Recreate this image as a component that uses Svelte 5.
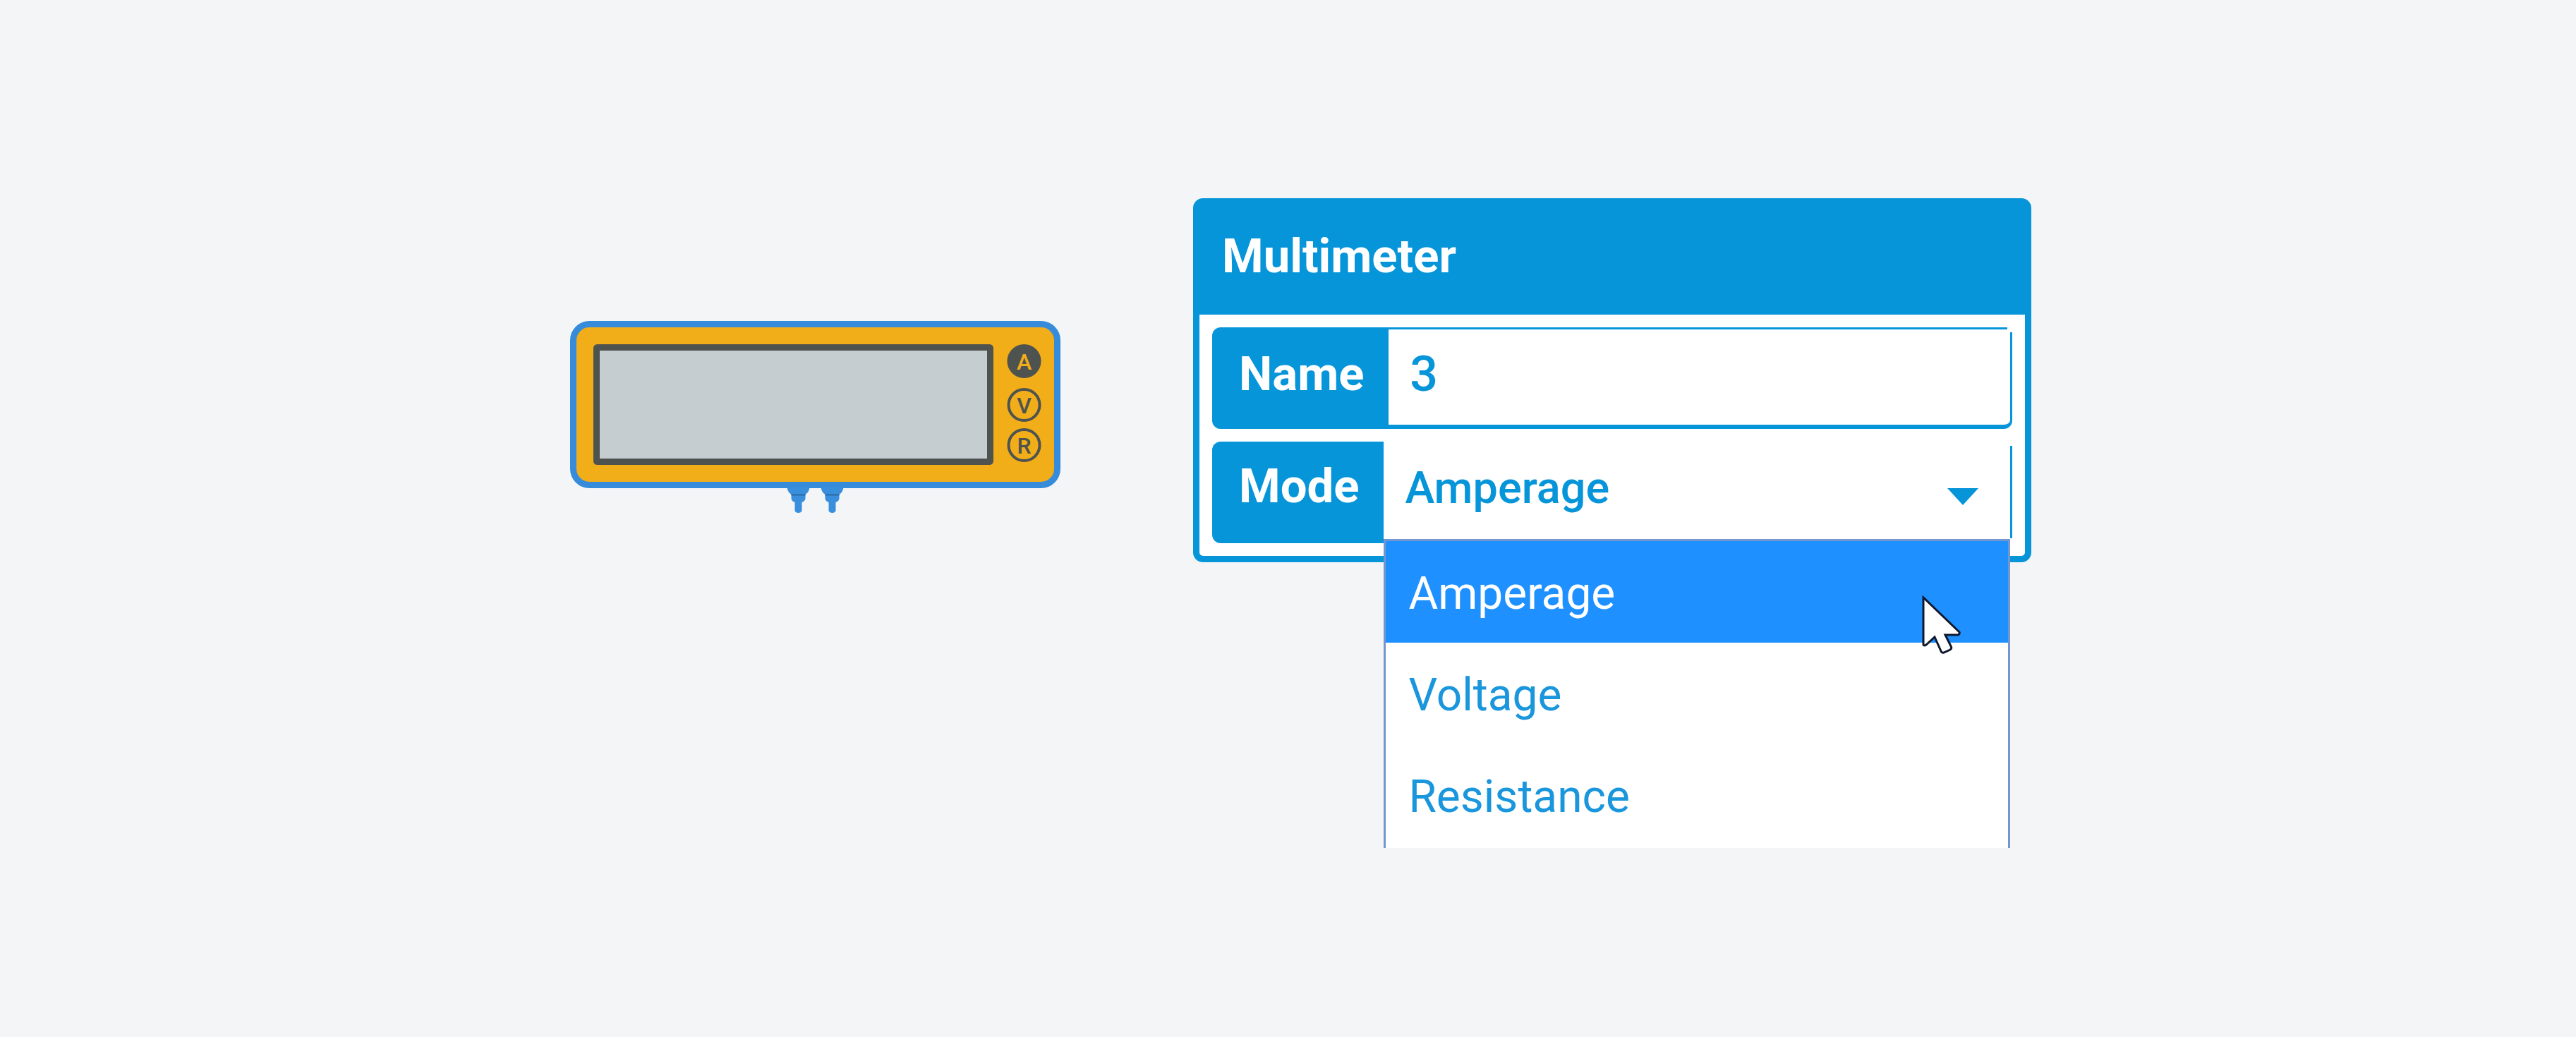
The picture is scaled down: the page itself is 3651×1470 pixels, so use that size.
<script>
  const modes = ['Amperage', 'Voltage', 'Resistance'];
  const indicators = [
    { letter: 'A', y: 57 },
    { letter: 'V', y: 119 },
    { letter: 'R', y: 176 }
  ];

  let name = $state('3');
  let mode = $state('Amperage');
</script>

<main>
  <svg class="device" viewBox="0 0 695 273" role="img" aria-label="Multimeter">
    <rect class="body" x="4.5" y="4.5" width="686" height="228" rx="23" />
    <rect class="screen" x="37.5" y="37.5" width="558" height="162" rx="1" />
    {#each indicators as { letter, y }}
      <g class="indicator" class:active={mode[0] === letter}>
        <circle cx="643.5" cy={y} r="22" />
        <text x="643.5" y={y + 12}>{letter}</text>
      </g>
    {/each}
    {#each [323.5, 371.5] as x}
      <g class="plug" transform="translate({x} 236)">
        <path d="M-16 0H16Q15 7 10 10V16Q9 20 5 21V33Q4 36 0 36Q-4 36 -5 33V21Q-9 20 -10 16V10Q-15 7 -16 0Z" />
        <path class="seam" d="M-10 10.500H10" />
      </g>
    {/each}
  </svg>

  <section class="panel">
    <h1>Multimeter</h1>
    <div class="fields">
      <div class="row">
        <label for="name">Name</label>
        <div class="control text">
          <input id="name" type="text" bind:value={name} />
        </div>
      </div>
      <div class="row">
        <label class="raised" for="mode">Mode</label>
        <div class="control choice">
          <select id="mode" bind:value={mode}>
            {#each modes as option}
              <option>{option}</option>
            {/each}
          </select>
          <svg class="caret" viewBox="0 0 44 24" aria-hidden="true"><path d="M0 0H44L22 24Z" /></svg>
          <div class="menu">
            {#each modes as option}
              <button type="button" class:selected={mode === option} onclick={() => (mode = option)}>{option}</button>
            {/each}
            <svg class="pointer" viewBox="0 0 56 84" aria-hidden="true">
              <path d="M2 3V70Q3 72 6 70L18 59L27 79Q28 82 31 81L40 77Q43 75 41 72L33 56H51Q54 55 53 52Z" />
            </svg>
          </div>
        </div>
      </div>
    </div>
  </section>
</main>

<style>
  :global(body) {
    margin: 0;
    background: #f3f5f7;
  }

  main {
    display: grid;
    grid-template-columns: 808fr 695fr 188fr 1188fr 772fr;
    align-items: start;
    box-sizing: border-box;
    min-height: 100vh;
    padding: 281px 0 240px;
    font-family: Roboto, 'Liberation Sans', sans-serif;
  }

  .device {
    grid-column: 2;
    width: 100%;
    margin-top: 174px;
  }

  .body {
    fill: #f2ae19;
    stroke: #368cda;
    stroke-width: 9;
  }

  .screen {
    fill: #c6cdd0;
    stroke: #4e5350;
    stroke-width: 9;
  }

  .indicator circle {
    fill: none;
    stroke: #4e5350;
    stroke-width: 4;
  }

  .indicator text {
    fill: #4e5350;
    font-size: 32px;
    font-weight: 500;
    text-anchor: middle;
  }

  .indicator.active circle {
    fill: #4e5350;
  }

  .indicator.active text {
    fill: #f2ae19;
  }

  .plug path {
    fill: #3a8fdd;
  }

  .plug .seam {
    stroke: #2869a4;
    stroke-width: 2;
  }

  .panel {
    grid-column: 4;
    border: 9px solid #0795da;
    border-radius: 14px;
    background: #fff;
  }

  h1 {
    margin: 0;
    padding: 0 32px 10px;
    background: #0795da;
    color: #fff;
    font-size: 67px;
    font-weight: 700;
    line-height: 146px;
  }

  .fields {
    display: flex;
    flex-direction: column;
    gap: 18px;
    padding: 18px;
  }

  .row {
    display: flex;
    height: 144px;
  }

  label {
    box-sizing: border-box;
    padding: 0 35px 0 38px;
    border-radius: 12px 0 0 12px;
    background: #0795da;
    color: #fff;
    font-size: 67px;
    font-weight: 700;
    line-height: 132px;
  }

  label.raised {
    line-height: 126px;
  }

  .control {
    position: relative;
    box-sizing: border-box;
    flex: 1;
    min-width: 0;
  }

  .text {
    border: solid #0795da;
    border-width: 3px 3px 6px 0;
    border-radius: 0 0 12px 0;
  }

  .text::after {
    content: '';
    position: absolute;
    top: -3px;
    right: -3px;
    width: 7px;
    height: 7px;
    background: #fff;
  }

  input,
  select {
    display: block;
    box-sizing: border-box;
    width: 100%;
    height: 100%;
    margin: 0;
    border: 0;
    outline: 0;
    background: none;
    color: #0795da;
    font-family: inherit;
    font-weight: 500;
    appearance: none;
  }

  input {
    padding: 0 30px 9px;
    font-size: 70px;
  }

  select {
    padding: 0 96px 14px 30px;
    font-size: 63px;
  }

  .choice::after {
    content: '';
    position: absolute;
    inset: 6px 0 7px auto;
    width: 3px;
    background: #0795da;
  }

  .caret {
    position: absolute;
    top: 66px;
    right: 48px;
    width: 44px;
    height: 24px;
    fill: #0795da;
    pointer-events: none;
  }

  .menu {
    position: absolute;
    top: 138px;
    left: 0;
    right: 3px;
    padding-bottom: 3px;
    border: solid #7396d0;
    border-width: 3px 3px 0;
    background: #fff;
  }

  button {
    display: block;
    box-sizing: border-box;
    width: 100%;
    height: 144px;
    padding: 5px 32px 0;
    border: 0;
    background: #fff;
    color: #1996dc;
    font-family: inherit;
    font-size: 64px;
    font-weight: 400;
    text-align: left;
  }

  button.selected {
    background: #1e90ff;
    color: #fff;
  }

  .pointer {
    position: absolute;
    top: 77px;
    right: 66px;
    width: 56px;
    height: 84px;
    fill: #fff;
    stroke: #10182c;
    stroke-width: 3;
    pointer-events: none;
  }
</style>
